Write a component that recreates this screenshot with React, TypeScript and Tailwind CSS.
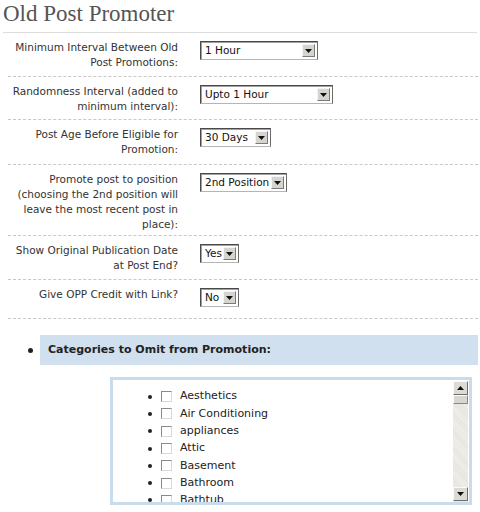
import type { ReactNode } from 'react';

const SANS = "font-['DejaVu_Sans',Verdana,sans-serif]";

function Arrow({ up = false }: { up?: boolean }) {
  return (
    <svg width="7" height="4" viewBox="0 0 7 4" aria-hidden="true">
      <path d={up ? 'M0 4 L3.5 0 L7 4 Z' : 'M0 0 L7 0 L3.5 4 Z'} fill="#111" />
    </svg>
  );
}

function FakeSelect({ value, className }: { value: string; className: string }) {
  return (
    <div
      className={`flex h-[19px] items-center border border-[#4a4a4a] border-b-[#b5b5b5] border-r-[#6a6a6a] bg-white shadow-[inset_1px_1px_0_#a0a0a0] ${className}`}
    >
      <span className="flex-1 overflow-hidden whitespace-nowrap pl-[4px] text-[10.5px] leading-[15px] text-[#111]">
        {value}
      </span>
      <span className="mr-[2px] flex h-[13px] w-[13px] shrink-0 items-center justify-center border border-t-[#f4f4f4] border-l-[#f4f4f4] border-b-[#7a7a7a] border-r-[#7a7a7a] bg-[#d6d4ce]">
        <Arrow />
      </span>
    </div>
  );
}

// rows keep the heights of the reference form table
function Row({ label, height, children }: { label: ReactNode; height: string; children: ReactNode }) {
  return (
    <div className={`flex box-border border-b border-dashed border-[#c8c8c8] ${height}`}>
      <div className="w-[170px] shrink-0 whitespace-nowrap pt-[6.5px] text-right text-[10.5px] leading-[15px] text-[#333]">
        {label}
      </div>
      <div className="pl-[22px] pt-[8px]">{children}</div>
    </div>
  );
}

const CATEGORIES = ['Aesthetics', 'Air Conditioning', 'appliances', 'Attic', 'Basement', 'Bathroom', 'Bathtub'];

export default function App() {
  return (
    <div className={`h-[512px] w-[480px] overflow-hidden bg-white ${SANS}`}>
      <div className="mx-[3px] border-b border-[#dcdcdc] pb-[4px]">
        <h2 className="font-['Liberation_Serif','Times_New_Roman',serif] text-[23px] leading-[28px] text-[#555]">
          Old Post Promoter
        </h2>
      </div>

      <div className="ml-[8px] mr-[2px]">
        <Row height="h-[44px]" label={<>Minimum Interval Between Old<br />Post Promotions:</>}>
          <FakeSelect value="1 Hour" className="w-[118px]" />
        </Row>
        <Row height="h-[43px]" label={<>Randomness Interval (added to<br />minimum interval):</>}>
          <FakeSelect value="Upto 1 Hour" className="w-[133px]" />
        </Row>
        <Row height="h-[45px]" label={<>Post Age Before Eligible for<br />Promotion:</>}>
          <FakeSelect value="30 Days" className="w-[71px]" />
        </Row>
        <Row
          height="h-[71px]"
          label={
            <>
              Promote post to position
              <br />
              (choosing the 2nd position will
              <br />
              leave the most recent post in
              <br />
              place):
            </>
          }
        >
          <FakeSelect value="2nd Position" className="w-[87px]" />
        </Row>
        <Row height="h-[44px]" label={<>Show Original Publication Date<br />at Post End?</>}>
          <FakeSelect value="Yes" className="w-[39px]" />
        </Row>
        <Row height="h-[39px]" label="Give OPP Credit with Link?">
          <FakeSelect value="No" className="w-[39px]" />
        </Row>
      </div>

      <div className="mt-[16px] mr-[2px] flex items-center pl-[28px]">
        <span className="h-[5px] w-[5px] shrink-0 rounded-full bg-[#222]" />
        <div className="ml-[7px] flex h-[30px] flex-1 items-center bg-[#d0e0ee] pl-[8px] text-[11px] font-bold text-[#222]">
          Categories to Omit from Promotion:
        </div>
      </div>

      <div className="ml-[110px] mt-[12px] flex h-[128px] w-[362px] border-[3px] border-[#c9dcec] bg-white">
        <ul className="flex-1 overflow-hidden pl-[35px] pt-[8px]">
          {CATEGORIES.map((name) => (
            <li key={name} className="flex h-[17.3px] items-center text-[11px] text-[#222]">
              <span className="h-[4px] w-[4px] rounded-full bg-[#222]" />
              <span className="ml-[9px] h-[11px] w-[11px] border border-[#8a8a8a] border-b-[#d8d8d8] border-r-[#d8d8d8] bg-white" />
              <span className="ml-[8px] whitespace-nowrap">{name}</span>
            </li>
          ))}
        </ul>
        <div className="mr-[1px] mt-[1px] flex w-[15px] flex-col bg-[repeating-linear-gradient(45deg,#e6e4de_0px,#e6e4de_1px,#f1efea_1px,#f1efea_2px)]">
          <span className="flex h-[14px] items-center justify-center border border-t-[#fafafa] border-l-[#fafafa] border-b-[#6e6e6e] border-r-[#6e6e6e] bg-[#dcdad4]">
            <Arrow up />
          </span>
          <span className="h-[9px] border border-t-[#fafafa] border-l-[#fafafa] border-b-[#888] border-r-[#888] bg-[#d8d6d0]" />
          <span className="flex-1" />
          <span className="mb-[1px] flex h-[14px] items-center justify-center border border-t-[#fafafa] border-l-[#fafafa] border-b-[#6e6e6e] border-r-[#6e6e6e] bg-[#dcdad4]">
            <Arrow />
          </span>
        </div>
      </div>
    </div>
  );
}
